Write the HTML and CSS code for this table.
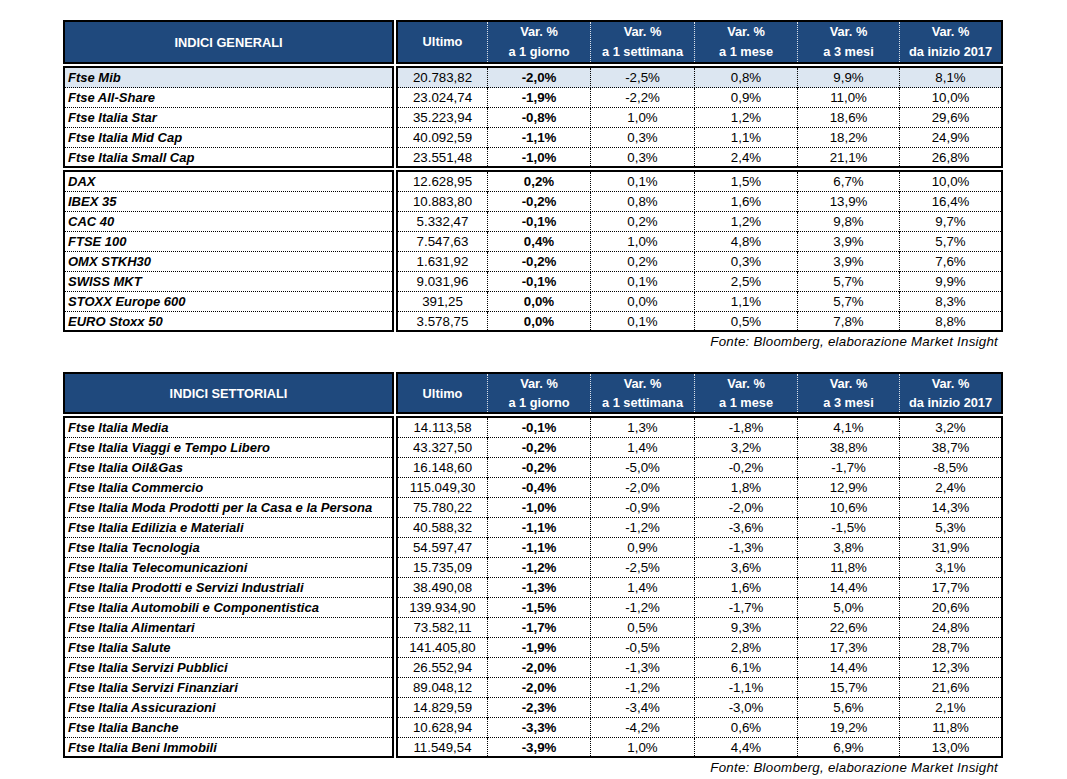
FILE: index.html
```html
<!DOCTYPE html>
<html lang="it">
<head>
<meta charset="utf-8">
<title>Indici</title>
<link rel="stylesheet" href="styles.css">
</head>
<body>
<div class="page">

  <section class="tbl">
    <div class="band head">
      <div class="box names"><div class="hname">INDICI GENERALI</div></div>
      <div class="box values">
        <div class="hrow">
          <span class="hc">Ultimo</span>
          <span class="hc">Var. %<br>a 1 giorno</span>
          <span class="hc">Var. %<br>a 1 settimana</span>
          <span class="hc">Var. %<br>a 1 mese</span>
          <span class="hc">Var. %<br>a 3 mesi</span>
          <span class="hc">Var. %<br>da inizio 2017</span>
        </div>
      </div>
    </div>
    <div class="band">
      <div class="box names">
        <div class="nrow hl">Ftse Mib</div>
        <div class="nrow">Ftse All-Share</div>
        <div class="nrow">Ftse Italia Star</div>
        <div class="nrow">Ftse Italia Mid Cap</div>
        <div class="nrow">Ftse Italia Small Cap</div>
      </div>
      <div class="box values">
        <div class="vrow hl"><span>20.783,82</span><span class="b">-2,0%</span><span>-2,5%</span><span>0,8%</span><span>9,9%</span><span>8,1%</span></div>
        <div class="vrow"><span>23.024,74</span><span class="b">-1,9%</span><span>-2,2%</span><span>0,9%</span><span>11,0%</span><span>10,0%</span></div>
        <div class="vrow"><span>35.223,94</span><span class="b">-0,8%</span><span>1,0%</span><span>1,2%</span><span>18,6%</span><span>29,6%</span></div>
        <div class="vrow"><span>40.092,59</span><span class="b">-1,1%</span><span>0,3%</span><span>1,1%</span><span>18,2%</span><span>24,9%</span></div>
        <div class="vrow"><span>23.551,48</span><span class="b">-1,0%</span><span>0,3%</span><span>2,4%</span><span>21,1%</span><span>26,8%</span></div>
      </div>
    </div>
    <div class="band">
      <div class="box names">
        <div class="nrow">DAX</div>
        <div class="nrow">IBEX 35</div>
        <div class="nrow">CAC 40</div>
        <div class="nrow">FTSE 100</div>
        <div class="nrow">OMX STKH30</div>
        <div class="nrow">SWISS MKT</div>
        <div class="nrow">STOXX Europe 600</div>
        <div class="nrow">EURO Stoxx 50</div>
      </div>
      <div class="box values">
        <div class="vrow"><span>12.628,95</span><span class="b">0,2%</span><span>0,1%</span><span>1,5%</span><span>6,7%</span><span>10,0%</span></div>
        <div class="vrow"><span>10.883,80</span><span class="b">-0,2%</span><span>0,8%</span><span>1,6%</span><span>13,9%</span><span>16,4%</span></div>
        <div class="vrow"><span>5.332,47</span><span class="b">-0,1%</span><span>0,2%</span><span>1,2%</span><span>9,8%</span><span>9,7%</span></div>
        <div class="vrow"><span>7.547,63</span><span class="b">0,4%</span><span>1,0%</span><span>4,8%</span><span>3,9%</span><span>5,7%</span></div>
        <div class="vrow"><span>1.631,92</span><span class="b">-0,2%</span><span>0,2%</span><span>0,3%</span><span>3,9%</span><span>7,6%</span></div>
        <div class="vrow"><span>9.031,96</span><span class="b">-0,1%</span><span>0,1%</span><span>2,5%</span><span>5,7%</span><span>9,9%</span></div>
        <div class="vrow"><span>391,25</span><span class="b">0,0%</span><span>0,0%</span><span>1,1%</span><span>5,7%</span><span>8,3%</span></div>
        <div class="vrow"><span>3.578,75</span><span class="b">0,0%</span><span>0,1%</span><span>0,5%</span><span>7,8%</span><span>8,8%</span></div>
      </div>
    </div>
    <div class="src">Fonte: Bloomberg, elaborazione Market Insight</div>
  </section>

  <section class="tbl tbl2">
    <div class="band head">
      <div class="box names"><div class="hname">INDICI SETTORIALI</div></div>
      <div class="box values">
        <div class="hrow">
          <span class="hc">Ultimo</span>
          <span class="hc">Var. %<br>a 1 giorno</span>
          <span class="hc">Var. %<br>a 1 settimana</span>
          <span class="hc">Var. %<br>a 1 mese</span>
          <span class="hc">Var. %<br>a 3 mesi</span>
          <span class="hc">Var. %<br>da inizio 2017</span>
        </div>
      </div>
    </div>
    <div class="band">
      <div class="box names">
        <div class="nrow">Ftse Italia Media</div>
        <div class="nrow">Ftse Italia Viaggi e Tempo Libero</div>
        <div class="nrow">Ftse Italia Oil&amp;Gas</div>
        <div class="nrow">Ftse Italia Commercio</div>
        <div class="nrow">Ftse Italia Moda Prodotti per la Casa e la Persona</div>
        <div class="nrow">Ftse Italia Edilizia e Materiali</div>
        <div class="nrow">Ftse Italia Tecnologia</div>
        <div class="nrow">Ftse Italia Telecomunicazioni</div>
        <div class="nrow">Ftse Italia Prodotti e Servizi Industriali</div>
        <div class="nrow">Ftse Italia Automobili e Componentistica</div>
        <div class="nrow">Ftse Italia Alimentari</div>
        <div class="nrow">Ftse Italia Salute</div>
        <div class="nrow">Ftse Italia Servizi Pubblici</div>
        <div class="nrow">Ftse Italia Servizi Finanziari</div>
        <div class="nrow">Ftse Italia Assicurazioni</div>
        <div class="nrow">Ftse Italia Banche</div>
        <div class="nrow">Ftse Italia Beni Immobili</div>
      </div>
      <div class="box values">
        <div class="vrow"><span>14.113,58</span><span class="b">-0,1%</span><span>1,3%</span><span>-1,8%</span><span>4,1%</span><span>3,2%</span></div>
        <div class="vrow"><span>43.327,50</span><span class="b">-0,2%</span><span>1,4%</span><span>3,2%</span><span>38,8%</span><span>38,7%</span></div>
        <div class="vrow"><span>16.148,60</span><span class="b">-0,2%</span><span>-5,0%</span><span>-0,2%</span><span>-1,7%</span><span>-8,5%</span></div>
        <div class="vrow"><span>115.049,30</span><span class="b">-0,4%</span><span>-2,0%</span><span>1,8%</span><span>12,9%</span><span>2,4%</span></div>
        <div class="vrow"><span>75.780,22</span><span class="b">-1,0%</span><span>-0,9%</span><span>-2,0%</span><span>10,6%</span><span>14,3%</span></div>
        <div class="vrow"><span>40.588,32</span><span class="b">-1,1%</span><span>-1,2%</span><span>-3,6%</span><span>-1,5%</span><span>5,3%</span></div>
        <div class="vrow"><span>54.597,47</span><span class="b">-1,1%</span><span>0,9%</span><span>-1,3%</span><span>3,8%</span><span>31,9%</span></div>
        <div class="vrow"><span>15.735,09</span><span class="b">-1,2%</span><span>-2,5%</span><span>3,6%</span><span>11,8%</span><span>3,1%</span></div>
        <div class="vrow"><span>38.490,08</span><span class="b">-1,3%</span><span>1,4%</span><span>1,6%</span><span>14,4%</span><span>17,7%</span></div>
        <div class="vrow"><span>139.934,90</span><span class="b">-1,5%</span><span>-1,2%</span><span>-1,7%</span><span>5,0%</span><span>20,6%</span></div>
        <div class="vrow"><span>73.582,11</span><span class="b">-1,7%</span><span>0,5%</span><span>9,3%</span><span>22,6%</span><span>24,8%</span></div>
        <div class="vrow"><span>141.405,80</span><span class="b">-1,9%</span><span>-0,5%</span><span>2,8%</span><span>17,3%</span><span>28,7%</span></div>
        <div class="vrow"><span>26.552,94</span><span class="b">-2,0%</span><span>-1,3%</span><span>6,1%</span><span>14,4%</span><span>12,3%</span></div>
        <div class="vrow"><span>89.048,12</span><span class="b">-2,0%</span><span>-1,2%</span><span>-1,1%</span><span>15,7%</span><span>21,6%</span></div>
        <div class="vrow"><span>14.829,59</span><span class="b">-2,3%</span><span>-3,4%</span><span>-3,0%</span><span>5,6%</span><span>2,1%</span></div>
        <div class="vrow"><span>10.628,94</span><span class="b">-3,3%</span><span>-4,2%</span><span>0,6%</span><span>19,2%</span><span>11,8%</span></div>
        <div class="vrow"><span>11.549,54</span><span class="b">-3,9%</span><span>1,0%</span><span>4,4%</span><span>6,9%</span><span>13,0%</span></div>
      </div>
    </div>
    <div class="src">Fonte: Bloomberg, elaborazione Market Insight</div>
  </section>

</div>
</body>
</html>
```

FILE: styles.css
```css
* { box-sizing: border-box; }

body {
  margin: 0;
  background: #ffffff;
  color: #000000;
  font-family: "Liberation Sans", Arial, sans-serif;
  font-size: 13.3px;
}

.page {
  padding: 20px 0 0 63px;
}

.tbl {
  width: 940px;
}

.tbl + .tbl {
  margin-top: 20px;
}

.band {
  display: flex;
  gap: 2px;
}

.band + .band {
  margin-top: 2px;
}

.box {
  border: 2px solid #000;
}

.names {
  width: 331px;
}

.values {
  width: 607px;
}

/* header */
.head .box {
  background: #1F497D;
  color: #ffffff;
  font-weight: 700;
  font-size: 12.8px;
}

.hname {
  height: 40px;
  display: flex;
  align-items: center;
  justify-content: center;
}

.hrow {
  display: grid;
  grid-template-columns: 90px 103px 104px 103px 102px 101px;
  height: 40px;
}

.hc {
  display: flex;
  align-items: center;
  justify-content: center;
  text-align: center;
  line-height: 20px;
  border-right: 1px dotted rgba(255, 255, 255, 0.85);
}

.hc:last-child {
  border-right: 0;
}

.tbl2 .hname,
.tbl2 .hrow {
  height: 38px;
}

.tbl2 .hc {
  line-height: 19px;
}

/* name rows */
.nrow {
  height: 20px;
  line-height: 20px;
  padding-left: 3px;
  border-bottom: 1px dotted #000;
  font-size: 13px;
  font-weight: 700;
  font-style: italic;
  white-space: nowrap;
}

.nrow:last-child {
  height: 18px;
  border-bottom: 0;
}

/* value rows */
.vrow {
  display: grid;
  grid-template-columns: 90px 103px 104px 103px 102px 101px;
  height: 20px;
  border-bottom: 1px dotted #000;
}

.vrow:last-child {
  height: 18px;
  border-bottom: 0;
}

.vrow > span {
  text-align: center;
  line-height: 20px;
  white-space: nowrap;
  border-right: 1px dotted #000;
}

.vrow > span:last-child {
  border-right: 0;
}

.vrow .b {
  font-weight: 700;
}

.hl {
  background: #DCE6F1;
}

.src {
  height: 20px;
  line-height: 20px;
  text-align: right;
  padding-right: 5px;
  font-style: italic;
  letter-spacing: 0.25px;
}
```
